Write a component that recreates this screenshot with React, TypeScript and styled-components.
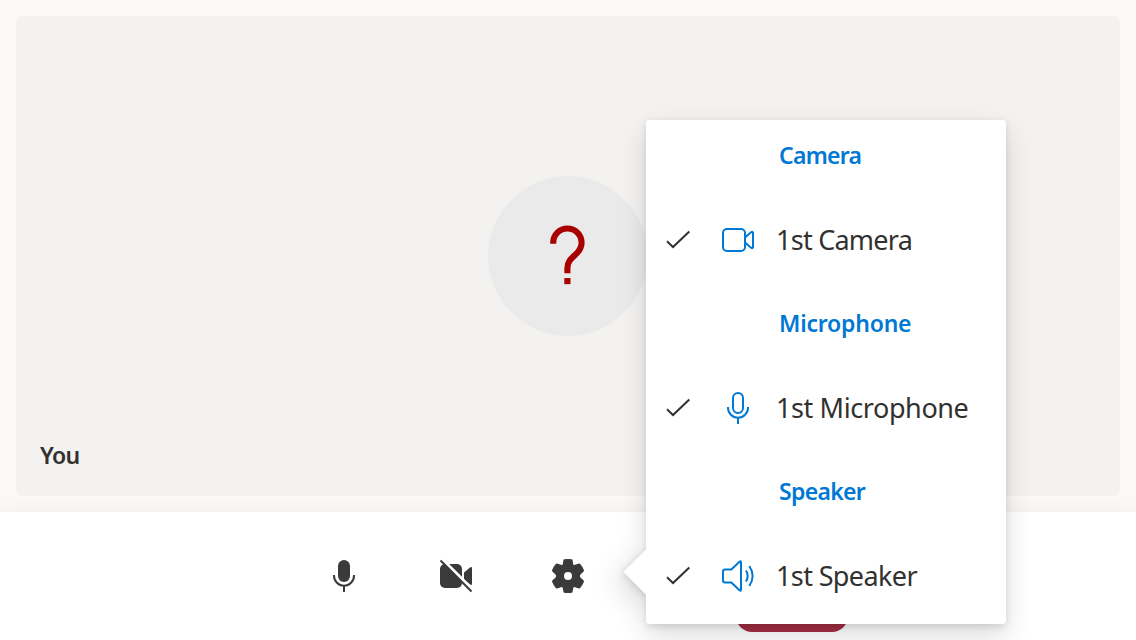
import React from 'react';
import styled, { createGlobalStyle } from 'styled-components';

const Global = createGlobalStyle`
  * { box-sizing: border-box; }
  body { margin: 0; background: #faf9f8; overflow: hidden; }
`;

const Screen = styled.main`
  position: relative;
  width: 1136px;
  height: 640px;
  overflow: hidden;
  display: flex;
  flex-direction: column;
  background: #faf9f8;
  font-family: 'Segoe UI', 'Noto Sans', sans-serif;
  color: #323130;
`;

const Stage = styled.section`
  height: 512px;
  padding: 16px;
`;

const Tile = styled.div`
  height: 480px;
  border-radius: 8px;
  background: #f3f2f1;
  display: grid;
  grid-template-rows: 160px 160px 1fr;
  justify-items: center;
`;

const Avatar = styled.div`
  grid-row: 2;
  width: 160px;
  height: 160px;
  border-radius: 50%;
  background: #eaeaea;
  display: flex;
`;

const Name = styled.div`
  grid-row: 3;
  justify-self: start;
  align-self: end;
  padding: 0 24px 25px;
  font-size: 23px;
  line-height: 32px;
  font-weight: 600;
  letter-spacing: -0.7px;
`;

const ControlBar = styled.footer`
  flex: none;
  height: 128px;
  padding-top: 8px;
  background: #fff;
  display: flex;
  justify-content: center;
  box-shadow: 0 12.8px 28.8px rgba(0, 0, 0, 0.132);
`;

const ControlButton = styled.button<{ $danger?: boolean }>`
  width: 112px;
  height: 112px;
  padding: 0;
  border: 0;
  border-radius: 16px;
  background: ${(p) => (p.$danger ? '#a42e43' : 'transparent')};
  color: #3b3a39;
  display: flex;
  align-items: center;
  justify-content: center;
`;

const Callout = styled.div`
  position: absolute;
  left: 646px;
  top: 120px;
  width: 360px;
  height: 504px;
  border-radius: 4px;
  box-shadow: 0 12.8px 28.8px rgba(0, 0, 0, 0.132), 0 2.4px 7.2px rgba(0, 0, 0, 0.108);
`;

const Beak = styled.div`
  position: absolute;
  left: -16px;
  top: 436px;
  width: 32px;
  height: 32px;
  background: #fff;
  transform: rotate(45deg);
  box-shadow: inherit;
`;

const Menu = styled.div`
  position: relative;
  height: 100%;
  border-radius: 4px;
  background: #fff;
`;

const MenuHeader = styled.div<{ $spacing: number }>`
  height: 72px;
  padding-left: 133px;
  line-height: 70px;
  font-size: 23px;
  font-weight: 600;
  letter-spacing: ${(p) => p.$spacing}px;
  color: #0078d4;
`;

const MenuItem = styled.div`
  height: 96px;
  padding-left: 16px;
  display: flex;
  align-items: center;
`;

const ItemIcon = styled.span`
  display: flex;
  margin: 0 18px 0 24px;
  color: #0078d4;
`;

const ItemLabel = styled.span<{ $spacing: number }>`
  font-size: 27px;
  line-height: 40px;
  white-space: nowrap;
  letter-spacing: ${(p) => p.$spacing}px;
`;

const Svg = styled.svg`
  display: block;
  flex: none;
`;

const Check = () => (
  <Svg width="32" height="40" viewBox="0 0 32 40" fill="none" stroke="#323130" strokeWidth="2">
    <path d="M5 21.2 11 27 27.3 11.5" />
  </Svg>
);

const CameraIcon = () => (
  <Svg width="40" height="40" viewBox="0 0 40 40" fill="none" stroke="currentColor" strokeWidth="2">
    <rect x="5" y="9" width="22" height="22" rx="4" />
    <path d="M27.5 17 33 12.3q2-1.2 2 .7v14q0 1.9-2 .7L27.5 23" />
  </Svg>
);

const MicIcon = () => (
  <Svg width="40" height="40" viewBox="0 0 40 40" fill="none" stroke="currentColor" strokeWidth="2">
    <rect x="15" y="5" width="10" height="20" rx="5" />
    <path d="M10 19v.7a10 10 0 0 0 20 0V19M20 30v6" />
  </Svg>
);

const SpeakerIcon = () => (
  <Svg width="40" height="40" viewBox="0 0 40 40" fill="none" stroke="currentColor" strokeWidth="2">
    <path d="M7 13.5h6.3L21.5 5.7q1.5-1.2 1.5.8v27q0 2-1.5.8L13.3 26.5H7q-2 0-2-2v-9q0-2 2-2Z" />
    <path d="M28 14.5q3.4 5.5 0 11M31.300 10q6.700 10 0 20" />
  </Svg>
);

const QuestionIcon = () => (
  <Svg width="160" height="160" viewBox="0 0 160 160" fill="none" stroke="#a80000" strokeWidth="6.1">
    <path d="M65.2 67.7V66.7a14.2 14.2 0 0 1 28.4 0c0 5-2.4 8.300-5.700 11.400-4.500 4.200-8.500 7.600-8.500 14V97.300" />
    <path d="M76.3 105.1h6.2" />
  </Svg>
);

const MicFilled = () => (
  <Svg width="40" height="40" viewBox="0 0 40 40" fill="currentColor">
    <rect x="14" y="4" width="12" height="22" rx="6" />
    <path d="M10 19v.7a10 10 0 0 0 20 0V19M20 30v6" fill="none" stroke="currentColor" strokeWidth="2" />
  </Svg>
);

const CameraOff = () => (
  <Svg width="40" height="40" viewBox="0 0 40 40" fill="currentColor">
    <rect x="4" y="8" width="22" height="24" rx="5" />
    <path d="M28 16.5 34 11.5q2-1.2 2 .5v16q0 1.7-2 .5l-6-5Z" />
    <path d="m6.9 3.9 31 31" stroke="#fff" strokeWidth="2.9" />
    <path d="m4.5 4.5 31 31" stroke="currentColor" strokeWidth="2" />
  </Svg>
);

const Gear = () => (
  <Svg width="40" height="40" viewBox="0 0 40 40" fill="currentColor" stroke="currentColor" strokeWidth="1.6" strokeLinejoin="round">
    <path d="M16.3 4.1q3.7-.6 7.4 0l.9 4.6q.4 1.3 1.7 1.1l5.1-1.5q2.6 2.8 3.9 6.4l-3.6 3.6q-1.2 1.7 0 3.4l3.6 3.6q-1.3 3.6-3.9 6.4l-5.1-1.5q-1.3-.2-1.7 1.1l-.9 4.6q-3.7.6-7.4 0l-.9-4.6q-.4-1.3-1.7-1.1l-5.1 1.5q-2.6-2.8-3.9-6.4l3.6-3.6q1.2-1.7 0-3.4l-3.6-3.6q1.3-3.6 3.9-6.4l5.1 1.5q1.3.2 1.7-1.1Z" />
    <circle cx="20" cy="20" r="4" fill="#fff" stroke="none" />
  </Svg>
);

const sections = [
  { title: 'Camera', label: '1st Camera', icon: <CameraIcon />, titleSpacing: -0.75, labelSpacing: -0.75 },
  { title: 'Microphone', label: '1st Microphone', icon: <MicIcon />, titleSpacing: -0.22, labelSpacing: -0.4 },
  { title: 'Speaker', label: '1st Speaker', icon: <SpeakerIcon />, titleSpacing: -0.7, labelSpacing: -0.62 },
];

export default function App() {
  return (
    <Screen>
      <Global />
      <Stage>
        <Tile>
          <Avatar><QuestionIcon /></Avatar>
          <Name>You</Name>
        </Tile>
      </Stage>
      <ControlBar>
        <ControlButton aria-label="Mute"><MicFilled /></ControlButton>
        <ControlButton aria-label="Turn camera on"><CameraOff /></ControlButton>
        <ControlButton aria-label="Settings"><Gear /></ControlButton>
        <ControlButton aria-label="More" />
        <ControlButton aria-label="Leave" $danger />
      </ControlBar>
      <Callout>
        <Beak />
        <Menu>
          {sections.map((s) => (
            <React.Fragment key={s.title}>
              <MenuHeader $spacing={s.titleSpacing}>{s.title}</MenuHeader>
              <MenuItem>
                <Check />
                <ItemIcon>{s.icon}</ItemIcon>
                <ItemLabel $spacing={s.labelSpacing}>{s.label}</ItemLabel>
              </MenuItem>
            </React.Fragment>
          ))}
        </Menu>
      </Callout>
    </Screen>
  );
}
